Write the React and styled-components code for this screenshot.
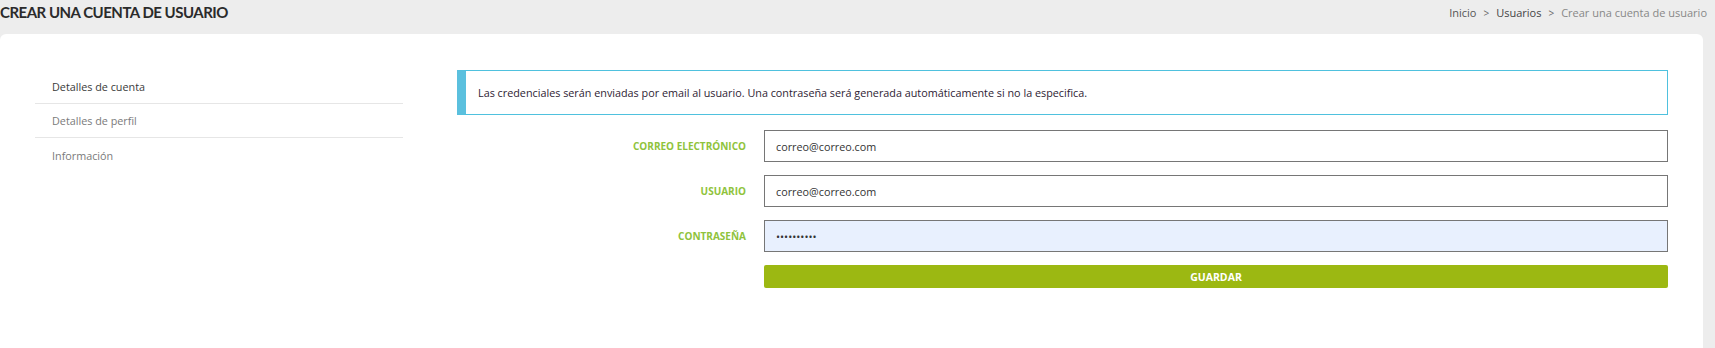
import React from "react";
import styled, { createGlobalStyle } from "styled-components";

const Global = createGlobalStyle`
  html, body { margin: 0; padding: 0; }
  body {
    background: #ededed;
    font-family: "Open Sans", "Noto Sans", sans-serif;
    color: #333;
  }
  * { box-sizing: border-box; }
`;

const Page = styled.div`
  display: flex;
  flex-direction: column;
  height: 348px;
`;

const Header = styled.header`
  height: 34px;
  display: flex;
  justify-content: space-between;
  align-items: flex-start;
  padding-right: 8px;
`;

const Title = styled.h1`
  margin: 0;
  padding-top: 1px;
  font-family: "Lato", "Open Sans", sans-serif;
  font-weight: 700;
  font-size: 15px;
  line-height: 22px;
  color: #2b2b2b;
  letter-spacing: -0.5px;
`;

const Crumbs = styled.nav`
  display: flex;
  align-items: center;
  gap: 7px;
  font-size: 11px;
  line-height: 26px;
`;

const Crumb = styled.span`
  color: ${(p) => p.$color};
`;

const Sep = styled.span`
  color: #666;
  font-size: 10px;
`;

const Card = styled.main`
  flex: 1;
  margin-right: 12px;
  background: #fff;
  border-radius: 6px 6px 0 0;
  padding: 36px 35px;
  display: flex;
  gap: 54px;
`;

const Sidebar = styled.ul`
  list-style: none;
  margin: 0;
  padding: 0;
  width: 368px;
  flex: none;
`;

const NavItem = styled.li`
  height: 34px;
  display: flex;
  align-items: center;
  padding-left: 17px;
  font-size: 10.8px;
  color: ${(p) => (p.$active ? "#3a3a3a" : "#7a7a7a")};
  border-bottom: ${(p) => (p.$last ? "none" : "1px solid #e6e6e6")};
`;

const Content = styled.section`
  flex: 1;
  display: flex;
  flex-direction: column;
`;

const Alert = styled.div`
  height: 45px;
  border: 1px solid #4fc1de;
  border-left: 9px solid #5bc0de;
  display: flex;
  align-items: center;
  padding-left: 12px;
  font-size: 10.8px;
  color: #2e2233;
`;

const Form = styled.form`
  margin-top: 15px;
  display: grid;
  grid-template-columns: 289px 1fr;
  column-gap: 18px;
  row-gap: 13px;
  align-items: center;
`;

const Label = styled.label`
  text-align: right;
  font-size: 10px;
  font-weight: 700;
  color: #8fc33c;
  text-transform: uppercase;
`;

const Input = styled.input`
  height: 32px;
  width: 100%;
  border: 1px solid #767676;
  border-radius: 0;
  padding: 0 11px;
  font-family: "Open Sans", sans-serif;
  font-size: 10.8px;
  color: #333;
  background: ${(p) => (p.$filled ? "#e8f0fe" : "#fff")};
  outline: none;
`;

const Button = styled.button`
  grid-column: 2;
  height: 23px;
  border: none;
  border-radius: 2px;
  background: #9cb812;
  color: #fff;
  font-family: "Open Sans", sans-serif;
  font-weight: 700;
  font-size: 10.5px;
  cursor: pointer;
`;

export default function App() {
  return (
    <>
      <Global />
      <Page>
        <Header>
          <Title>CREAR UNA CUENTA DE USUARIO</Title>
          <Crumbs>
            <Crumb $color="#555">Inicio</Crumb>
            <Sep>&gt;</Sep>
            <Crumb $color="#444">Usuarios</Crumb>
            <Sep>&gt;</Sep>
            <Crumb $color="#888">Crear una cuenta de usuario</Crumb>
          </Crumbs>
        </Header>
        <Card>
          <Sidebar>
            <NavItem $active>Detalles de cuenta</NavItem>
            <NavItem>Detalles de perfil</NavItem>
            <NavItem $last>Información</NavItem>
          </Sidebar>
          <Content>
            <Alert>
              Las credenciales serán enviadas por email al usuario. Una contraseña será generada automáticamente si no la especifica.
            </Alert>
            <Form onSubmit={(e) => e.preventDefault()}>
              <Label htmlFor="email">Correo electrónico</Label>
              <Input id="email" type="text" defaultValue="correo@correo.com" />
              <Label htmlFor="user">Usuario</Label>
              <Input id="user" type="text" defaultValue="correo@correo.com" />
              <Label htmlFor="pass">Contraseña</Label>
              <Input id="pass" type="password" defaultValue="abcdefghij" $filled />
              <Button type="submit">GUARDAR</Button>
            </Form>
          </Content>
        </Card>
      </Page>
    </>
  );
}
